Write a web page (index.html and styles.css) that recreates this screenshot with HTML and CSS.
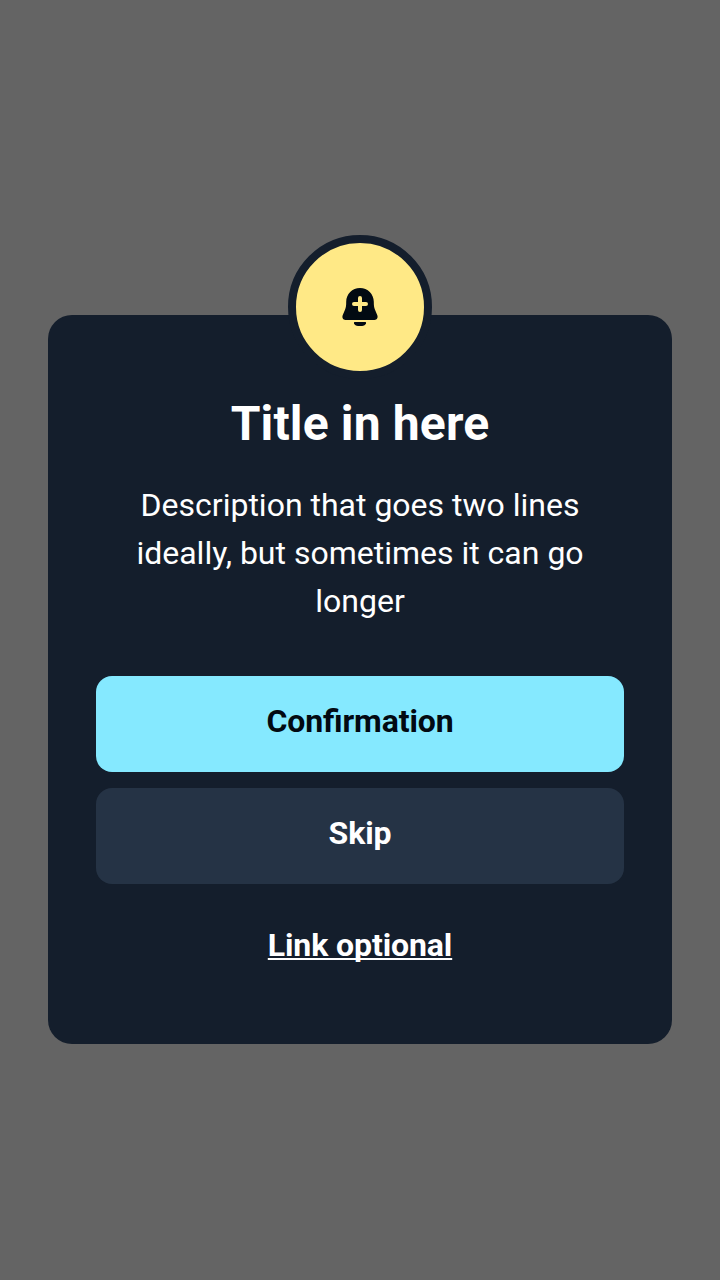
FILE: index.html
```html
<!DOCTYPE html>
<html lang="en">
<head>
<meta charset="utf-8">
<title>Dialog</title>
<link rel="stylesheet" href="styles.css">
</head>
<body>
<main class="backdrop">
  <section class="dialog" role="dialog" aria-labelledby="title">
    <div class="badge">
      <svg class="bell" viewBox="0 0 40 40" aria-hidden="true">
        <path d="M20 2C12.300 2 6.200 8.100 6.200 15.800C6.200 19.500 6 21.200 5 23.800L2.900 28.800C1.600 31.500 2.900 34 5.500 34H34.500C37.100 34 38.400 31.500 37.100 28.800L35 23.800C34 21.200 33.800 19.500 33.800 15.800C33.800 8.100 27.700 2 20 2Z" fill="#020a12"/>
        <path d="M20 12V24M14 18H26" stroke="#ffe986" stroke-width="4" stroke-linecap="round"/>
        <path d="M15 36H25C25.800 36 26.200 36.500 26 37.200C25.400 39 23.900 40 22 40H18C16.100 40 14.600 39 14 37.200C13.800 36.500 14.200 36 15 36Z" fill="#020a12"/>
      </svg>
    </div>
    <h1 class="title" id="title">Title in here</h1>
    <p class="description">Description that goes two lines ideally, but sometimes it can go longer</p>
    <div class="actions">
      <button class="button button-primary">Confirmation</button>
      <button class="button button-secondary">Skip</button>
      <a class="link" href="#">Link optional</a>
    </div>
  </section>
</main>
</body>
</html>
```
FILE: styles.css
```css
* { box-sizing: border-box; }
body { margin: 0; font-family: Roboto, sans-serif; color: #fff; }
.backdrop {
  height: 1280px;
  padding: 315px 48px 0;
  background: #646464;
}
.dialog {
  display: flex;
  flex-direction: column;
  align-items: center;
  height: 729px;
  padding: 0 48px;
  border-radius: 24px;
  background: #141e2c;
  text-align: center;
}
.badge {
  display: flex;
  flex: none;
  align-items: center;
  justify-content: center;
  width: 144px;
  height: 144px;
  margin-top: -80px;
  padding-bottom: 2px;
  border: 8px solid #141e2c;
  border-radius: 50%;
  background: #ffe986;
}
.bell { width: 40px; height: 40px; fill: none; }
.title { margin: 17px 0 0; font-size: 48px; line-height: 56px; font-weight: 700; letter-spacing: 0.15px; }
.description { width: 464px; margin: 29px 0 0; font-size: 32px; line-height: 48px; }
.actions {
  display: flex;
  flex-direction: column;
  gap: 16px;
  width: 100%;
  margin-top: 51px;
}
.button, .link {
  display: flex;
  justify-content: center;
  align-items: center;
  height: 96px;
  padding: 0 0 6px;
  border: 0;
  border-radius: 16px;
  font: 700 32px/48px Roboto, sans-serif;
  letter-spacing: -0.1px;
  font-feature-settings: "liga" 1;
}
.button-primary { background: #85e9ff; color: #020a12; }
.button-secondary { background: #253345; color: #fff; }
.link {
  color: #fff;
  text-decoration: underline;
  text-decoration-thickness: 2px;
  text-decoration-skip-ink: none;
  text-underline-offset: 2px;
}
```
